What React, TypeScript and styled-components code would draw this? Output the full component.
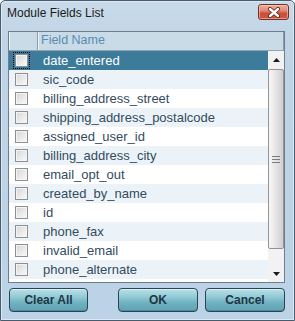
import React from 'react';
import styled, { createGlobalStyle } from 'styled-components';

const fields = [
  'date_entered',
  'sic_code',
  'billing_address_street',
  'shipping_address_postalcode',
  'assigned_user_id',
  'billing_address_city',
  'email_opt_out',
  'created_by_name',
  'id',
  'phone_fax',
  'invalid_email',
  'phone_alternate',
];

const GlobalStyle = createGlobalStyle`
  html, body {
    margin: 0;
    padding: 0;
    width: 295px;
    height: 321px;
    overflow: hidden;
    background: #ffffff;
  }
  * {
    box-sizing: border-box;
  }
`;

const Window = styled.div`
  width: 295px;
  height: 321px;
  display: flex;
  flex-direction: column;
  border: 1px solid #4a5b6b;
  border-radius: 5px 5px 0 0;
  background: linear-gradient(to bottom, #c9dbea 0px, #bfd4e6 40px, #bcd2e6 100%);
  box-shadow: inset 0 0 0 1px #dce8f2;
  font-family: "Liberation Sans", Arial, sans-serif;
`;

const TitleBar = styled.div`
  height: 24px;
  display: flex;
  align-items: flex-start;
  justify-content: space-between;
  padding: 0 5px 0 6px;
`;

const Title = styled.div`
  font-size: 12px;
  color: #1b1b1b;
  line-height: 24px;
`;

const CloseButton = styled.div`
  margin-top: 3px;
  width: 31px;
  height: 16px;
  border: 1px solid #7a2c22;
  border-radius: 3px;
  background: linear-gradient(to bottom, #eab0a2 0%, #df8a78 40%, #cc4f3a 60%, #c9583f 100%);
  box-shadow: inset 0 0 0 1px rgba(255, 220, 210, 0.5);
  display: flex;
  align-items: center;
  justify-content: center;
`;

const Body = styled.div`
  flex: 1;
  display: flex;
  flex-direction: column;
  padding: 6px 9px 0 7px;
`;

const Panel = styled.div`
  height: 252px;
  border: 1px solid #6f7e8a;
  background: #ffffff;
  display: flex;
  flex-direction: column;
`;

const Header = styled.div`
  height: 19px;
  display: flex;
  background: #c8dbe6;
  border-bottom: 1px solid #8fa3b1;
`;

const HeaderCell = styled.div<{ $w?: number }>`
  ${(p) => (p.$w ? `width: ${p.$w}px;` : 'flex: 1;')}
  border-left: 1px solid #eef4f8;
  border-right: 1px solid #8b9ca8;
  font-size: 12.5px;
  color: #5a8cb2;
  line-height: 17px;
  padding-left: 2px;
`;

const Content = styled.div`
  flex: 1;
  display: flex;
  overflow: hidden;
`;

const Rows = styled.div`
  flex: 1;
  display: flex;
  flex-direction: column;
`;

const Row = styled.div<{ $selected: boolean; $odd: boolean }>`
  height: 19px;
  flex-shrink: 0;
  display: flex;
  align-items: center;
  padding-left: 6px;
  background: ${(p) => (p.$selected ? '#3d7b9b' : p.$odd ? '#ecf3f8' : '#ffffff')};
  color: ${(p) => (p.$selected ? '#ffffff' : '#334b5d')};
  font-size: 13px;
`;

const Check = styled.span<{ $focus: boolean }>`
  width: 13px;
  height: 13px;
  flex-shrink: 0;
  border: 1px solid #8e8f8f;
  background: linear-gradient(135deg, #d4d4d4 0%, #e8e8e8 50%, #fbfbfb 100%);
  box-shadow: inset 0 0 0 1px #f4f4f4;
  ${(p) => (p.$focus ? 'outline: 1px dotted #000; outline-offset: 1px;' : '')}
`;

const Label = styled.span`
  margin-left: 15px;
  white-space: nowrap;
`;

const Scrollbar = styled.div`
  width: 16px;
  display: flex;
  flex-direction: column;
  background-color: #f2f2f2;
  background-image: radial-gradient(#e2e2e2 0.6px, transparent 0.7px);
  background-size: 2px 2px;
`;

const Arrow = styled.div`
  height: 17px;
  display: flex;
  align-items: center;
  justify-content: center;
`;

const Thumb = styled.div`
  height: 180px;
  margin-top: 1px;
  border: 1px solid #939393;
  border-radius: 2px;
  background: linear-gradient(to right, #f7f7f7 0%, #e6e6e6 45%, #cfcfcf 100%);
  display: flex;
  align-items: center;
  justify-content: center;
`;

const Grip = styled.div`
  width: 8px;
  height: 7px;
  border-top: 1px solid #7c7c7c;
  border-bottom: 1px solid #7c7c7c;
  position: relative;

  &::after {
    content: '';
    position: absolute;
    left: 0;
    right: 0;
    top: 2px;
    border-top: 1px solid #7c7c7c;
  }
`;

const Track = styled.div`
  flex: 1;
`;

const Footer = styled.div`
  display: flex;
  padding-top: 5px;
  padding-left: 1px;
  gap: 7px;
`;

const Button = styled.div<{ $push?: boolean }>`
  width: ${(p) => (p.$push ? 80 : 79)}px;
  height: 24px;
  ${(p) => (p.$push ? 'margin-left: auto;' : '')}
  border: 1px solid #2b4550;
  border-radius: 4px;
  background: linear-gradient(to bottom, #b9e0e8 0%, #93cbd6 35%, #72b3c2 60%, #5fa2b2 100%);
  box-shadow: inset 0 1px 0 #d8eff3, inset 0 -1px 0 #4d8d9c;
  display: flex;
  align-items: center;
  justify-content: center;
  font-size: 12px;
  font-weight: bold;
  color: #1e3646;
`;

const Spacer = styled.div`
  flex: 1;
`;

const App: React.FC = () => {
  return (
    <>
      <GlobalStyle />
      <Window>
        <TitleBar>
          <Title>Module Fields List</Title>
          <CloseButton>
            <svg width="14" height="11" viewBox="0 0 14 11">
              <path d="M3 2 L11 9 M11 2 L3 9" stroke="#5a1e16" strokeWidth="4" strokeLinecap="round" />
              <path d="M3 2 L11 9 M11 2 L3 9" stroke="#ffffff" strokeWidth="2.4" strokeLinecap="round" />
            </svg>
          </CloseButton>
        </TitleBar>
        <Body>
          <Panel>
            <Header>
              <HeaderCell $w={29} />
              <HeaderCell>Field Name</HeaderCell>
            </Header>
            <Content>
              <Rows>
                {fields.map((f, i) => (
                  <Row key={f} $selected={i === 0} $odd={i % 2 === 1}>
                    <Check $focus={i === 0} />
                    <Label>{f}</Label>
                  </Row>
                ))}
              </Rows>
              <Scrollbar>
                <Arrow>
                  <svg width="7" height="4" viewBox="0 0 7 4">
                    <path d="M3.5 0 L7 4 L0 4 Z" fill="#1a1a1a" />
                  </svg>
                </Arrow>
                <Thumb>
                  <Grip />
                </Thumb>
                <Track />
                <Arrow>
                  <svg width="7" height="4" viewBox="0 0 7 4">
                    <path d="M0 0 L7 0 L3.5 4 Z" fill="#1a1a1a" />
                  </svg>
                </Arrow>
              </Scrollbar>
            </Content>
          </Panel>
          <Footer>
            <Button>Clear All</Button>
            <Spacer />
            <Button $push>OK</Button>
            <Button $push>Cancel</Button>
          </Footer>
        </Body>
      </Window>
    </>
  );
};

export default App;
